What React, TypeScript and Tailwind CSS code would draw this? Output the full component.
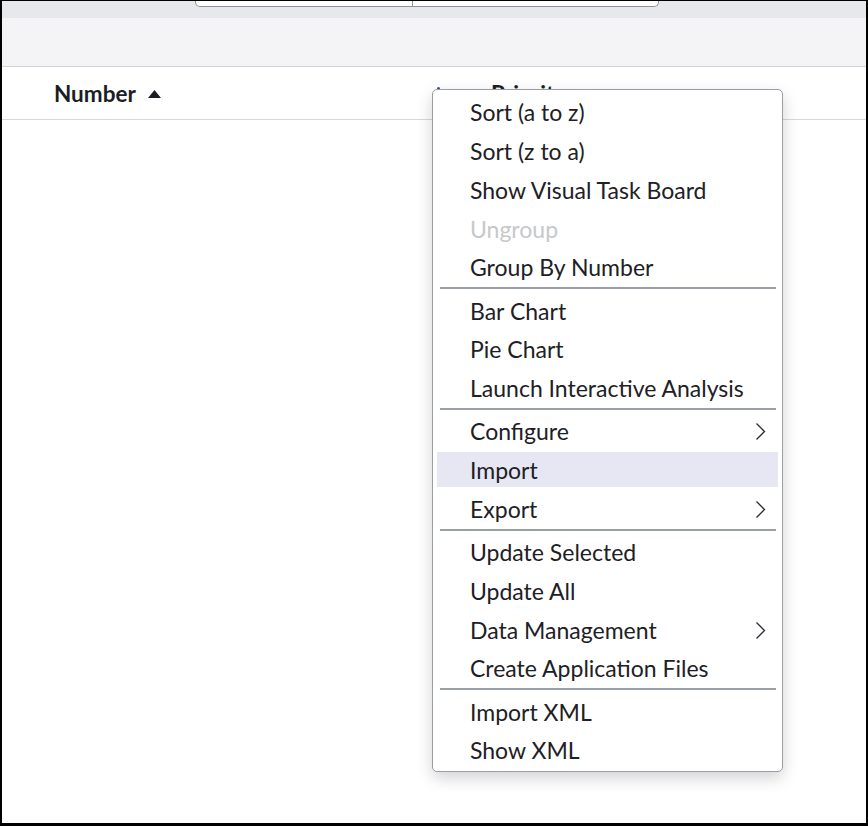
import React from "react";

type Item = { label: string; disabled?: boolean; submenu?: boolean; active?: boolean };

const groups: Item[][] = [
  [
    { label: "Sort (a to z)" },
    { label: "Sort (z to a)" },
    { label: "Show Visual Task Board" },
    { label: "Ungroup", disabled: true },
    { label: "Group By Number" },
  ],
  [{ label: "Bar Chart" }, { label: "Pie Chart" }, { label: "Launch Interactive Analysis" }],
  [{ label: "Configure", submenu: true }, { label: "Import", active: true }, { label: "Export", submenu: true }],
  [
    { label: "Update Selected" },
    { label: "Update All" },
    { label: "Data Management", submenu: true },
    { label: "Create Application Files" },
  ],
  [{ label: "Import XML" }, { label: "Show XML" }],
];

function Chevron() {
  return (
    <svg width="11" height="19" viewBox="0 0 11 19" fill="none">
      <polyline points="1.5,1.5 9.5,9.5 1.5,17.5" stroke="#2a2d33" strokeWidth="1.3" />
    </svg>
  );
}

function MenuItem({ item }: { item: Item }) {
  return (
    <div className="h-[38.75px] px-[4px] py-[2px]">
      <div
        className={`h-full pl-[33px] pr-[12px] pt-[3px] flex items-center justify-between leading-none text-[23px] ${
          item.active ? "bg-[#e7e7f4]" : ""
        } ${item.disabled ? "text-[#c6c8cc]" : "text-[#1d2025]"}`}
      >
        <span>{item.label}</span>
        {item.submenu && <Chevron />}
      </div>
    </div>
  );
}

export default function App() {
  return (
    <div className="w-[868px] h-[826px] relative overflow-hidden bg-white border-x-2 border-t border-b-[3px] border-black font-['Lato',sans-serif]">
      {/* toolbar strip */}
      <div className="h-[17px] bg-[#e7e8eb]">
        <div className="ml-[193px] w-[464px] h-[6px] flex bg-white border-x border-b border-[#8b9099] rounded-b-[5px]">
          <div className="w-[217px] border-r border-[#8b9099]" />
        </div>
      </div>
      <div className="h-[49px] bg-[#f4f4f6] border-b border-[#d1d3d9]" />

      {/* column header */}
      <div className="h-[53px] flex items-center border-b border-[#d5d7dc] text-[#1b1e23]">
        <div className="w-[435px] pl-[52px] pt-[2px] flex items-center gap-[12px]">
          <span className="text-[22.5px] font-bold">Number</span>
          <svg width="13" height="8" viewBox="0 0 13 8">
            <polygon points="6.5,0 13,8 0,8" fill="#1b1e23" />
          </svg>
        </div>
        <div className="w-[3px] h-[12px] rounded-full bg-[#3a4798]" />
        <span className="ml-[51px] pt-[2px] text-[22.5px] font-bold">Priority</span>
      </div>

      {/* context menu */}
      <div className="absolute left-[430px] top-[88px] w-[351px] py-[2px] bg-white border border-[#9a9ea8] rounded-[5px] shadow-[0_6px_16px_rgba(0,0,0,0.18)]">
        {groups.map((g, gi) => (
          <div key={gi}>
            {gi > 0 && (
              <div className="pt-[1.5px] pb-[1px]">
                <div className="ml-[7px] mr-[6px] h-[2px] bg-[#9a9ea7]" />
              </div>
            )}
            {g.map((item) => (
              <MenuItem key={item.label} item={item} />
            ))}
          </div>
        ))}
      </div>
    </div>
  );
}
